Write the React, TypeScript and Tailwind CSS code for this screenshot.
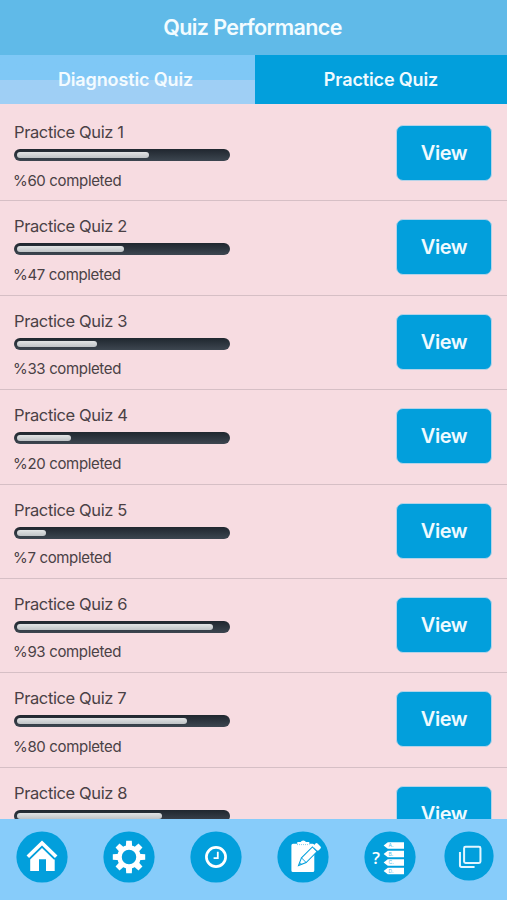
import React from 'react';

const quizzes = [
    { id: 1, percent: 60 },
    { id: 2, percent: 47 },
    { id: 3, percent: 33 },
    { id: 4, percent: 20 },
    { id: 5, percent: 7 },
    { id: 6, percent: 93 },
    { id: 7, percent: 80 },
    { id: 8, percent: 67 },
];

function QuizRow({ id, percent }: { id: number; percent: number }) {
    return (
        <li className="flex h-[94.4px] shrink-0 items-start justify-between border-b border-[#d6bfc5] pl-3.5 pr-[15px]">
            <div className="pt-[13px]">
                <h2 className="h-6 text-[16.5px] leading-6 tracking-[-0.38px] text-[#4a4145]">Practice Quiz {id}</h2>
                <div className="mt-[5px] h-3 w-[216px] rounded-[6px] bg-linear-to-b from-[#20272f] to-[#3d4650] px-[3px] py-[3px]">
                    <div
                        className="h-1.5 rounded-[3px] bg-linear-to-b from-[#e2e4e5] to-[#bfc3c6]"
                        style={{ width: 15.7 + percent * 1.934 }}
                    />
                </div>
                <p className="-ml-px mt-[9.5px] text-[15px] leading-5 tracking-[-0.34px] text-[#4a4145]">%{percent} completed</p>
            </div>
            <button className="mt-[18px] h-14 w-24 rounded-[7px] border border-[#b5d3e8] bg-[#029fdc] text-[20px] font-semibold tracking-[-0.4px] text-[#effaff]">
                View
            </button>
        </li>
    );
}

function NavIcon({ label, size = 'w-[52px]', children }: { label: string; size?: string; children: React.ReactNode }) {
    return (
        <button aria-label={label} className={`${size} shrink-0`}>
            <svg viewBox="0 0 52 52" className="block w-full">
                <circle cx="26" cy="26" r="25.6" fill="#029fdc" />
                {children}
            </svg>
        </button>
    );
}

const teeth = [0, 45, 90, 135, 180, 225, 270, 315];

const answers = [
    { letter: 'A.', y: 11.3 },
    { letter: 'B.', y: 19.8 },
    { letter: 'C.', y: 28.3 },
    { letter: 'D.', y: 36.8 },
];

export default function App() {
    return (
        <div className="flex h-[900px] w-[507px] flex-col overflow-hidden bg-[#f7dce1] font-['Inter','Liberation_Sans',sans-serif]">
            <header className="flex h-[55px] shrink-0 items-center justify-center bg-[#60bae8] pb-px pr-[2px]">
                <h1 className="text-[21.5px] font-semibold tracking-[-0.6px] text-[#f3fcff]">Quiz Performance</h1>
            </header>

            <nav className="flex h-[49px] shrink-0 text-[18px] font-semibold tracking-[-0.13px]">
                <button className="w-[255px] bg-linear-to-b from-[#7fc8f6] from-51% to-[#9fcff5] to-51% pr-1 text-[#f3fbff]">
                    Diagnostic Quiz
                </button>
                <button className="flex-1 bg-[#029fdc] text-[#effaff]">Practice Quiz</button>
            </nav>

            <ul className="flex min-h-0 flex-1 flex-col overflow-hidden pt-[3px]">
                {quizzes.map((quiz) => (
                    <QuizRow key={quiz.id} {...quiz} />
                ))}
            </ul>

            <footer className="flex h-[81px] shrink-0 items-start justify-between bg-[#87ccfa] pl-4 pr-[13px] pt-3">
                <NavIcon label="Home">
                    <path d="M11.8 25.8 26 11.9l14.2 13.9" fill="none" stroke="#fff" strokeWidth="3.6" />
                    <path d="M14.2 28.4 26 17l11.8 11.4h.9V40H30V28.2h-7V40h-8.8z" fill="#fff" />
                </NavIcon>
                <NavIcon label="Settings">
                    {teeth.map((angle) => (
                        <path key={angle} d="M22.8 17 23.2 9.8h5.6l.4 7.2z" fill="#fff" transform={`rotate(${angle} 26 26)`} />
                    ))}
                    <circle cx="26" cy="26" r="9.5" fill="none" stroke="#fff" strokeWidth="4.5" />
                </NavIcon>
                <NavIcon label="History">
                    <circle cx="26" cy="26" r="9.6" fill="none" stroke="#fff" strokeWidth="2.7" />
                    <path d="M27.8 20.8v6.4h-4.2" fill="none" stroke="#fff" strokeWidth="1.8" />
                </NavIcon>
                <NavIcon label="Tests">
                    <path d="M16 12.8h4.3v-1.7h3.4q.5-1.6 2.6-1.6t2.6 1.6h3.4v1.7h3.4q1.6 0 1.6 1.6v25q0 1.6-1.6 1.6H16q-1.6 0-1.6-1.6v-25q0-1.6 1.6-1.6z" fill="#fff" />
                    <path d="M20 13.6h12.5" stroke="#029fdc" strokeWidth=".5" strokeDasharray="1 1" />
                    <g transform="translate(21.5 34.5) rotate(45)">
                        <path d="M0 0-3.3-7.5V-23h6.6v15.5z" fill="#fff" stroke="#029fdc" strokeWidth="1" />
                        <path d="M-3.3-7.5h6.6M-1.2-3H1.2" stroke="#029fdc" strokeWidth=".9" />
                        <rect x="-3.5" y="-29" width="7" height="5.2" rx="1.4" fill="#fff" />
                    </g>
                </NavIcon>
                <NavIcon label="Questions">
                    <text x="8.2" y="33.2" fontSize="17" fontWeight="600" fill="#fff" fontFamily="Open Sans, sans-serif">
                        ?
                    </text>
                    {answers.map(({ letter, y }) => (
                        <g key={letter} transform={`translate(19.6 ${y})`}>
                            <path d="M0 3.2 4.2 0h16.2v6.4H4.2z" fill="#fff" />
                            <text x="4.9" y="5" fontSize="5" fill="#4fbbe6">
                                {letter}
                            </text>
                        </g>
                    ))}
                </NavIcon>
                <NavIcon label="Cards" size="-ml-[7px] w-[50px]">
                    <rect x="20.9" y="16.4" width="17" height="16.8" rx="1.5" fill="none" stroke="#e2f6ff" strokeWidth="2.1" />
                    <path d="M16.6 21.8v13.9q0 1.7 1.7 1.7h13.5" fill="none" stroke="#e2f6ff" strokeWidth="2.1" />
                </NavIcon>
            </footer>
        </div>
    );
}
